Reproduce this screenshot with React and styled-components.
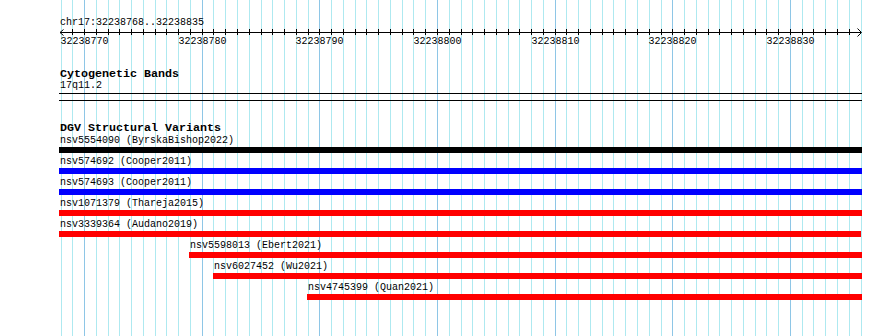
import styled, {createGlobalStyle} from 'styled-components'

const GlobalStyle = createGlobalStyle`
    body {
        margin: 0;
        background: #ffffff;
    }
`

const START = 32238768
const END = 32238835
const BASES = END - START + 1
const LEFT = 59
const RIGHT = 862

// grid lines / ticks follow the ruler scale, bars use the feature scale
const gridX = (b) => Math.round(60.5 + (b * 800) / BASES)
const barX = (b) => Math.round(LEFT + (b * (RIGHT - LEFT)) / BASES)

const variants = [
    {id: 'nsv5554090', study: 'ByrskaBishop2022', start: 32238768, color: '#000000'},
    {id: 'nsv574692', study: 'Cooper2011', start: 32238768, color: '#0000ff'},
    {id: 'nsv574693', study: 'Cooper2011', start: 32238768, color: '#0000ff'},
    {id: 'nsv1071379', study: 'Thareja2015', start: 32238768, color: '#ff0000'},
    {id: 'nsv3339364', study: 'Audano2019', start: 32238768, color: '#ff0000', cut: 1},
    {id: 'nsv5598013', study: 'Ebert2021', start: 32238779, color: '#ff0000'},
    {id: 'nsv6027452', study: 'Wu2021', start: 32238781, color: '#ff0000'},
    {id: 'nsv4745399', study: 'Quan2021', start: 32238789, color: '#ff0000'},
]

const Page = styled.div`
    position: relative;
    width: 890px;
    height: 336px;
    overflow: hidden;
    background: #ffffff;
    font-family: 'Liberation Mono', 'DejaVu Sans Mono', monospace;
    color: #000000;
`

const GridLayer = styled.svg`
    position: absolute;
    top: 0;
    left: 0;
    pointer-events: none;
`

const Panel = styled.div`
    position: relative;
    display: flex;
    flex-direction: column;
    padding-left: ${LEFT}px;
    width: ${RIGHT - LEFT}px;
`

const RegionLabel = styled.div`
    margin-top: 17px;
    font-size: 10px;
    line-height: 11px;
    height: 11px;
    padding-left: 1px;
    white-space: pre;
`

const RulerSvg = styled.svg`
    display: block;
`

const TrackTitle = styled.div`
    margin-top: ${(props) => props.$gap}px;
    font-size: 11.67px;
    font-weight: bold;
    line-height: 12px;
    height: 12px;
    padding-left: 1px;
    white-space: pre;
`

const Label = styled.div`
    font-size: 10px;
    line-height: 11px;
    height: 11px;
    padding-left: 1px;
    white-space: pre;
`

const Band = styled.div`
    margin-top: 2px;
    height: 8px;
    box-sizing: border-box;
    border-top: 1px solid #000000;
    border-bottom: 1px solid #000000;
`

const Rows = styled.div`
    display: flex;
    flex-direction: column;
    margin-top: 1px;
`

const Row = styled.div`
    display: flex;
    flex-direction: column;
    height: 21px;
    margin-left: ${(props) => props.$offset}px;
`

const Bar = styled.div`
    margin-top: 1px;
    height: 6px;
    width: ${(props) => props.$width}px;
    background: ${(props) => props.$color};
`

const Grid = () => {
    const lines = []
    for (let b = 0; b <= BASES; b++) {
        const x = gridX(b) + 0.5
        const major = (START + b) % 10 === 0
        lines.push(
            <line key={b} x1={x} x2={x} y1={0} y2={336}
                stroke={major ? '#8ec6e6' : '#aee9f0'} strokeWidth={1} />
        )
    }
    return <GridLayer width={890} height={336}>{lines}</GridLayer>
}

const Ruler = () => {
    const ticks = []
    const labels = []
    for (let b = 0; b < BASES + 1; b++) {
        const x = gridX(b) - LEFT + 0.5
        if (b > 0 && b < BASES) {
            ticks.push(<line key={b} x1={x} x2={x} y1={1} y2={7} stroke="#000" strokeWidth={1} />)
        }
        if ((START + b) % 10 === 0) {
            labels.push(
                <text key={'l' + b} x={x} y={15.5} textAnchor="middle"
                    fontFamily="'Liberation Mono', monospace" fontSize={10} fill="#000">
                    {START + b}
                </text>
            )
        }
    }
    const w = RIGHT - LEFT
    return <RulerSvg width={w} height={20}>
        <line x1={1} x2={802} y1={4.5} y2={4.5} stroke="#000" strokeWidth={1} />
        <polyline points="4.5,1.5 1,4.5 4.5,7.5" fill="none" stroke="#000" strokeWidth={1} />
        <polyline points="798.5,0.5 802.5,4.5 798.5,8.5" fill="none" stroke="#000" strokeWidth={1} />
        {ticks}
        {labels}
    </RulerSvg>
}

const App = () => {
    return <>
        <GlobalStyle />
        <Page>
            <Grid />
            <Panel>
                <RegionLabel>chr17:{START}..{END}</RegionLabel>
                <Ruler />

                <TrackTitle $gap={20}>Cytogenetic Bands</TrackTitle>
                <Label>17q11.2</Label>
                <Band />

                <TrackTitle $gap={21}>DGV Structural Variants</TrackTitle>
                <Rows>
                    {variants.map((v) => {
                        const left = barX(v.start - START)
                        return <Row key={v.id} $offset={left - LEFT}>
                            <Label>{v.id} ({v.study})</Label>
                            <Bar $color={v.color} $width={RIGHT - left - (v.cut || 0)} />
                        </Row>
                    })}
                </Rows>
            </Panel>
        </Page>
    </>
}

export default App
